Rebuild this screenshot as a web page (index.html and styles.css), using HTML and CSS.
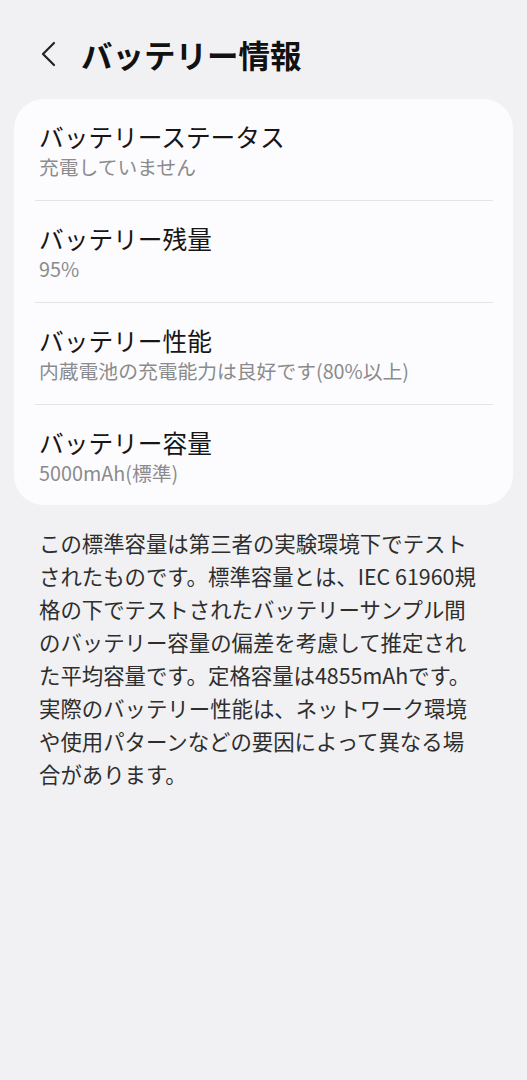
FILE: index.html
```html
<!DOCTYPE html>
<html lang="ja">
<head>
	<meta charset="UTF-8">
	<title>バッテリー情報</title>
	<link rel="stylesheet" href="styles.css">
</head>
<body>
	<header class="appbar">
		<button class="back" aria-label="戻る">
			<svg width="18" height="26" viewBox="0 0 18 26">
				<path d="M14 2 L3 13 L14 24" fill="none" stroke="#222" stroke-width="2.2" stroke-linecap="round" stroke-linejoin="round"/>
			</svg>
		</button>
		<h1>バッテリー情報</h1>
	</header>

	<section class="card">
		<div class="item">
			<div class="item-title">バッテリーステータス</div>
			<div class="item-sub">充電していません</div>
		</div>
		<div class="item">
			<div class="item-title">バッテリー残量</div>
			<div class="item-sub">95%</div>
		</div>
		<div class="item">
			<div class="item-title">バッテリー性能</div>
			<div class="item-sub">内蔵電池の充電能力は良好です(80%以上)</div>
		</div>
		<div class="item">
			<div class="item-title">バッテリー容量</div>
			<div class="item-sub">5000mAh(標準)</div>
		</div>
	</section>

	<p class="note">
		この標準容量は第三者の実験環境下でテスト<br>
		されたものです。標準容量とは、IEC 61960規<br>
		格の下でテストされたバッテリーサンプル間<br>
		のバッテリー容量の偏差を考慮して推定され<br>
		た平均容量です。定格容量は4855mAhです。<br>
		実際のバッテリー性能は、ネットワーク環境<br>
		や使用パターンなどの要因によって異なる場<br>
		合があります。
	</p>
</body>
</html>
```

FILE: styles.css
```css
body {
	margin: 0;
	background: #f1f1f3;
	font-family: "Noto Sans CJK JP", "Noto Sans", sans-serif;
	color: #1a1a1a;
}

.appbar {
	display: flex;
	align-items: center;
	height: 56px;
	padding: 26px 0 17px 36px;
}

.back {
	display: flex;
	align-items: center;
	justify-content: center;
	width: 26px;
	height: 30px;
	padding: 0;
	border: none;
	background: none;
}

.appbar h1 {
	margin: 0 0 0 19px;
	font-size: 31.5px;
	font-weight: 700;
	color: #111;
}

.card {
	margin: 0 14px;
	background: #fcfcfe;
	border-radius: 30px;
	padding: 0 20px 0 21px;
}

.item {
	padding: 21px 0 18px 4px;
	border-bottom: 1px solid #e4e4e6;
}

.item:last-child {
	border-bottom: none;
	padding-bottom: 17px;
}

.item-title {
	font-size: 24.7px;
	line-height: 32px;
	color: #161616;
}

.item-sub {
	font-size: 19.8px;
	line-height: 30px;
	color: #8b8b8d;
}

.note {
	margin: 21px 0 0;
	padding: 0 20px 0 39px;
	font-size: 21.4px;
	line-height: 33px;
	color: #2e2e2e;
}
```
